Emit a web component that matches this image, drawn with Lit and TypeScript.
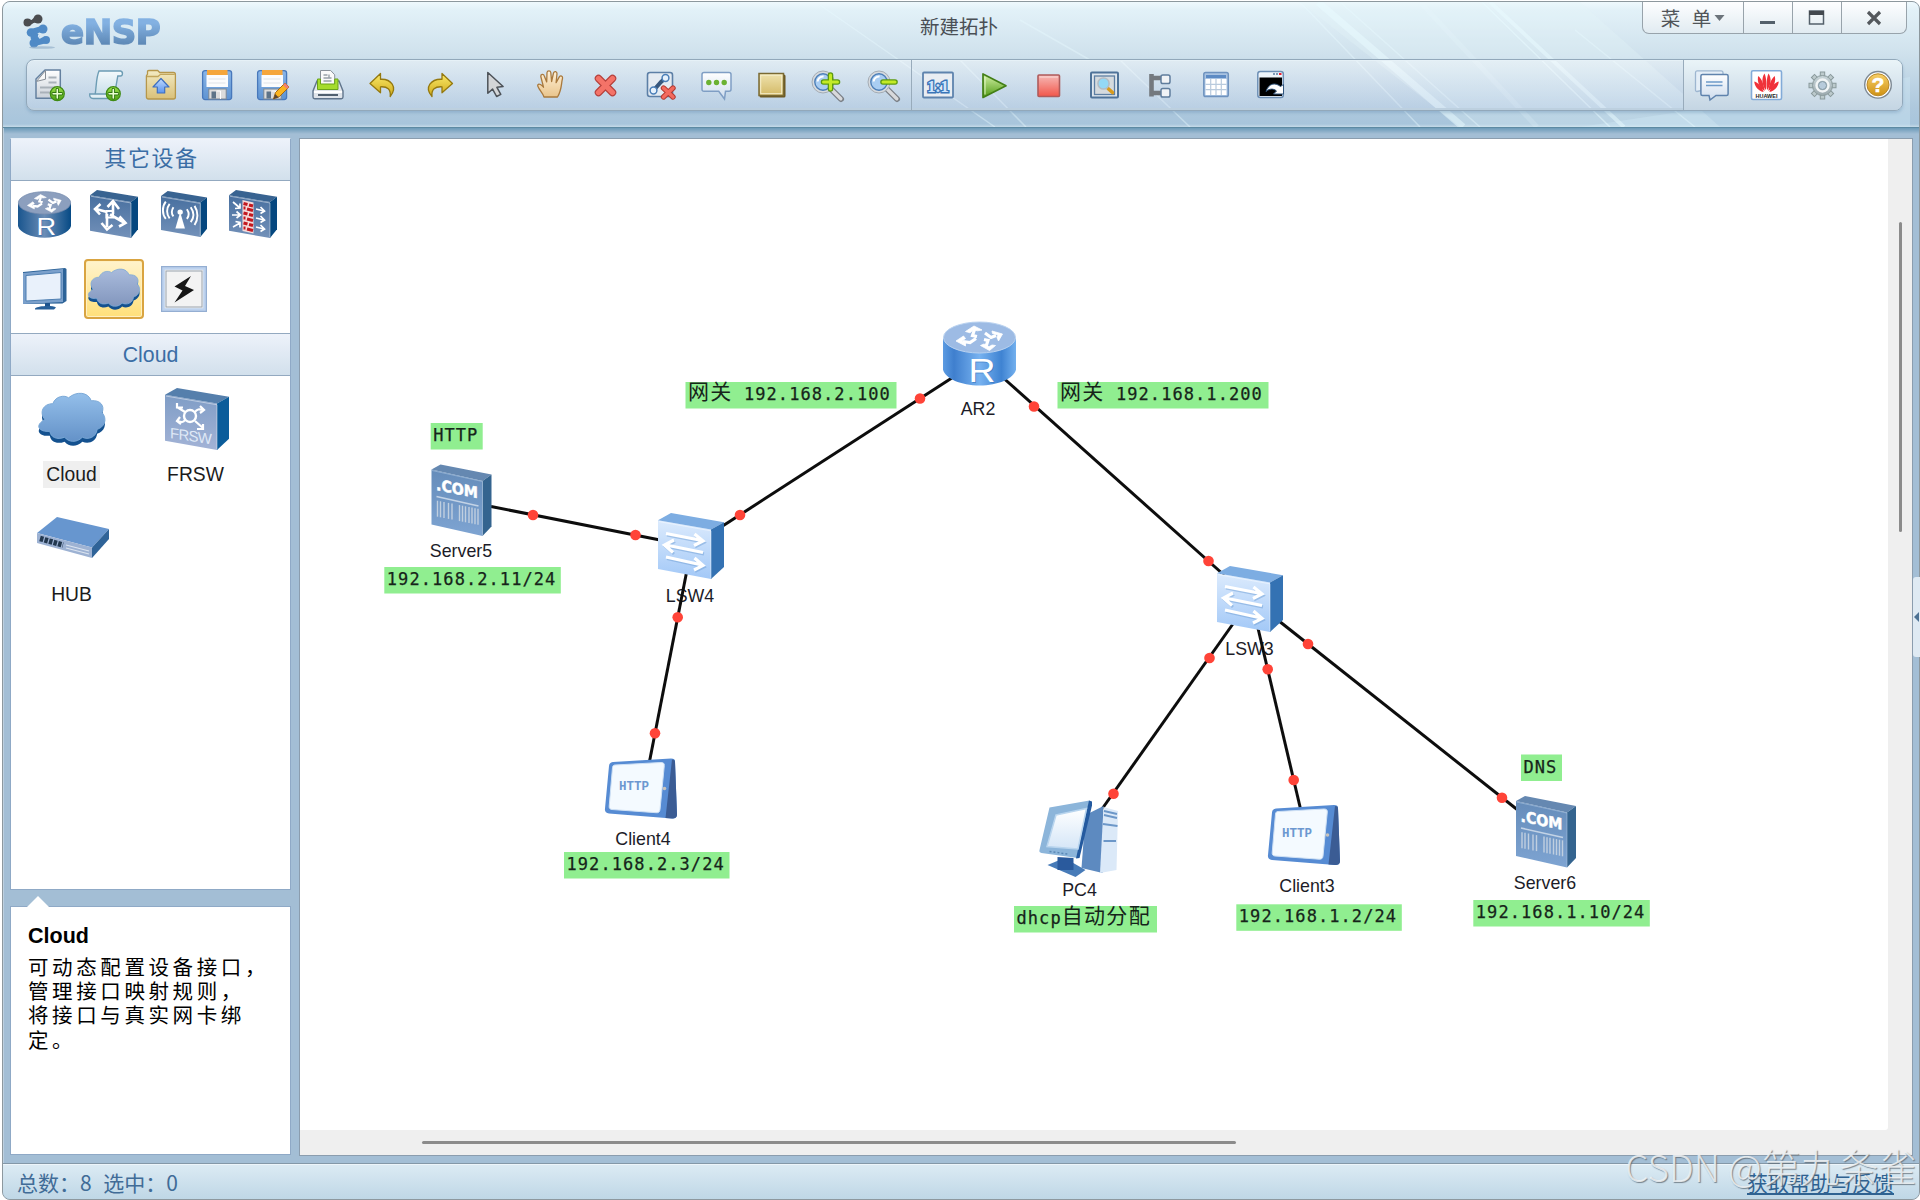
import { LitElement, html, svg, css } from 'lit';
import { customElement, state } from 'lit/decorators.js';
import { classMap } from 'lit/directives/class-map.js';

// ---- Shared gradients (each shadow root needs its own copy) ----

const grad = (id: string, from: string, to: string, horizontal = false) => svg`
  <linearGradient id=${id} x1="0" y1="0" x2=${horizontal ? 1 : 0} y2=${horizontal ? 0 : 1}>
    <stop offset="0" stop-color=${from} /><stop offset="1" stop-color=${to} />
  </linearGradient>`;

const defs = html`
  <svg class="defs" width="0" height="0">
    <defs>
      ${grad('g-paper', '#ffffff', '#c9d0d8')}
      ${grad('g-scroll', '#f4fafc', '#c3dbe8')}
      ${grad('g-plus', '#9be04a', '#4ba012')}
      ${grad('g-folder', '#f3ebc4', '#d9c078')}
      ${grad('g-blue', '#8ab6e8', '#5e93d2')}
      ${grad('g-arrow', '#c3dcff', '#5a94ee')}
      ${grad('g-gold', '#fbea6a', '#cfa91a')}
      ${grad('g-hand', '#fff1d8', '#e9c48b')}
      ${grad('g-pane', '#ffffff', '#cddced')}
      ${grad('g-rect', '#efe3ae', '#d3b966')}
      ${grad('g-play', '#d5f2a8', '#4f9a12')}
      ${grad('g-stop', '#f6b9b6', '#f2564a')}
      ${grad('g-gear', '#c9d6da', '#9caaae')}
      ${grad('g-help', '#f7cf68', '#cf9112')}
      ${grad('g-cloud', '#94bfea', '#6492c8')}
      ${grad('g-cloud-dim', '#a9bbdc', '#8296bd')}
      ${grad('g-dim', '#476f9f', '#7391b9')}
      ${grad('g-frsw', '#7f9dc6', '#a3b3d6')}
      ${grad('g-lsw', '#dcebfd', '#a2c8f7')}
      ${grad('g-server', '#658cba', '#7ea4d2')}
      ${grad('g-screen', '#ffffff', '#d5e6f7')}
      <linearGradient id="g-drum" x1="0" x2="1">
        <stop offset="0" stop-color="#5c9be2" /><stop offset=".15" stop-color="#3f7fce" />
        <stop offset=".5" stop-color="#77b2f0" /><stop offset=".8" stop-color="#3f83d2" />
        <stop offset="1" stop-color="#73b0ee" />
      </linearGradient>
      <linearGradient id="g-drum-dim" x1="0" x2="1">
        <stop offset="0" stop-color="#1a568f" /><stop offset=".5" stop-color="#6b8db6" />
        <stop offset="1" stop-color="#064a85" />
      </linearGradient>
    </defs>
  </svg>`;

// ---- Toolbar icons, 34x34 ----

const plusBadge = svg`
  <circle cx="24.3" cy="25.7" r="7" fill="url(#g-plus)" stroke="#3f8a14" stroke-width="1.2" />
  <path d="M24.3 21.5v8.4M20.1 25.7h8.4" stroke="#2f7410" stroke-width="3.4" stroke-linecap="round" />
  <path d="M24.3 21.5v8.4M20.1 25.7h8.4" stroke="#eaffd0" stroke-width="1.6" stroke-linecap="round" />`;

const floppy = svg`
  <rect x="2.6" y="2.6" width="29" height="29" rx="2.5" fill="url(#g-blue)" stroke="#4878bb" stroke-width="1.3" />
  <rect x="7" y="2" width="20.5" height="5" fill="#f5a63c" />
  <rect x="6.5" y="7" width="21.5" height="12" fill="#fbfcfd" />
  <path d="M8.5 11h17M8.5 15h17" stroke="#dfe3e8" />
  <rect x="8.8" y="21" width="17.4" height="10" fill="#dcdcdc" stroke="#7b8794" />
  <rect x="11.5" y="23.5" width="4.5" height="7" fill="#5d7388" />
  <path d="M16.5 23h4v8" fill="none" stroke="#fff" />`;

const lens = svg`
  <path d="M21 21l10 10" stroke="#7a7f86" stroke-width="6" stroke-linecap="round" />
  <path d="M20.5 20.5l10.3 10.3" stroke="#d8d9db" stroke-width="3.4" stroke-linecap="round" />
  <circle cx="13" cy="14" r="11" fill="#d6dade" stroke="#a4acb4" />
  <circle cx="13" cy="14" r="8.2" fill="#a9cdf2" stroke="#4d7fb8" stroke-width="1.4" />
  <path d="M7.6 13.5a5.5 5.5 0 0 1 6-5" fill="none" stroke="#fff" stroke-width="2" />`;

const icons: Record<string, unknown> = {
  newTopo: svg`
    <path d="M12 2h15.3v28.3H3V11z" fill="url(#g-paper)" stroke="#64809f" stroke-width="1.5" stroke-linejoin="round" />
    <path d="M12.5 2.6v8.6l-9 2.2z" fill="#f7f7f7" stroke="#858c94" />
    <path d="M15.5 9.5h8M15.5 14.5h8M7 19.5h16M7 24.5h10" stroke="#a9b1b9" stroke-width="1.8" />${plusBadge}`,
  newPaper: svg`
    <path d="M10 3h21.5c3 .6 2.2 5 0 5h-2.7l-3.8 21.5H5.5c2.2-8.5 1-18.5 4.5-26.5z" fill="url(#g-scroll)" stroke="#6c9cb4" stroke-width="1.4" />
    <path d="M.7 26h18l1.6 4.5H4C1.5 30.5.4 28.5.7 26z" fill="#e2eff4" stroke="#6c9cb4" stroke-width="1.3" />${plusBadge}`,
  open: svg`
    <path d="M3.5 6V3.7c0-.8.5-1.2 1.2-1.2h9l2 2h13.8c1.4 0 1.9.8 1.9 2V29c0 1.300-.8 2-2 2H4.5C3 31 2.4 30 2.4 29V8z" fill="url(#g-folder)" stroke="#b6974b" stroke-width="1.3" />
    <path d="M3 8.5h11l2.5-2.2h14.3" fill="none" stroke="#c3a75d" stroke-width="1.3" />
    <path d="M17 10.5l8 8.5h-4.3v6h-7.4v-6H9z" fill="url(#g-arrow)" stroke="#3e6fc0" stroke-width="1.2" stroke-linejoin="round" />`,
  save: floppy,
  saveAs: svg`${floppy}
    <path d="M18.5 31l2-6.5L30 15l4 4-9.5 9.5z" fill="#fbb41f" stroke="#a46912" stroke-width="1" />
    <path d="M30 15l4 4-2 2-4-4z" fill="#ef7f76" /><path d="M18.5 31l1.7-5 3.5 3.5z" fill="#5b4632" />`,
  print: svg`
    <path d="M6 13h22l4 10v6c0 1-.6 1.7-1.7 1.7H3.7C2.600 30.7 2 30 2 29v-6z" fill="#dfe4ea" stroke="#60758c" stroke-width="1.4" />
    <path d="M9.5 2.5h10.2l4 4.3V17H9.5z" fill="#fafafa" stroke="#8a929b" />
    <path d="M12.5 7h4M12.5 10h8M12.5 13h8M18 6.5v4" stroke="#98a0a8" stroke-width="1.4" />
    <path d="M6.5 11h3v5h14.2v-5h3.3v10.5H6.5z" fill="#a5dc2d" stroke="#6aa31a" />
    <path d="M3 24h28" stroke="#fff" stroke-width="2" /><path d="M7 27h20" stroke="#51606f" stroke-width="1.8" />`,
  undo: svg`<path d="M4 15.5L14.5 5.5v5.8c10.5-.6 17.5 8 9.7 17.2.8-7-2.7-10.2-9.7-9.7v6z" fill="url(#g-gold)" stroke="#95790f" stroke-width="1.3" stroke-linejoin="round" />`,
  redo: svg`<path d="M30.500 15.5L20 5.5v5.8C9.5 10.7 1.5 19.3 10 28.5c-.8-7 3-10.2 10-9.7v6z" fill="url(#g-gold)" stroke="#95790f" stroke-width="1.3" stroke-linejoin="round" />`,
  pointer: svg`<path d="M10 4.5v20.8l4.8-4.2 4 7.4 4.2-2.2-3.900-7 6.2-.8z" fill="#d3d5d7" stroke="#4d5258" stroke-width="1.5" stroke-linejoin="round" transform="translate(.8 0)" />`,
  hand: svg`<path d="M10 29c-1-4-6.5-8.8-6.3-12 1.3-2 4 0 5.8 2.2L6.8 8.5c-.2-2.5 2.7-2.9 3.5-.6l2.4 6L13 4.5c.3-2.3 3.5-2.3 3.8 0l.8 9 1.900-8.5c.8-2.2 3.6-1.6 3.5.7l-.9 9 3.2-5.800c1.3-1.9 3.8-.8 3.2 1.4C27 16.5 28 21.5 23.5 29z" fill="url(#g-hand)" stroke="#a9793d" stroke-width="1.3" stroke-linejoin="round" transform="translate(1 0)" />`,
  remove: svg`
    <path d="M10.5 10.500l14 14M24.5 10.5l-14 14" stroke="#b5403c" stroke-width="7.5" stroke-linecap="round" />
    <path d="M10.5 10.5l14 14M24.5 10.5l-14 14" stroke="#f47368" stroke-width="5.3" stroke-linecap="round" />`,
  removeLink: svg`
    <rect x="3.5" y="4.5" width="25" height="24" rx="2.5" fill="#e4ebf2" stroke="#5c7fa6" stroke-width="1.6" />
    <path d="M9.5 22.5L17 14l4.5-4" stroke="#37577d" stroke-width="4" fill="none" />
    <circle cx="9.5" cy="22.5" r="3.4" fill="#e6f1fc" stroke="#4b7fb8" stroke-width="1.5" />
    <circle cx="21.5" cy="10" r="3.4" fill="#e6f1fc" stroke="#4b7fb8" stroke-width="1.5" />
    <path d="M19.5 20l9.5 9M29 20l-9.5 9" stroke="#b33a32" stroke-width="5.4" stroke-linecap="round" />
    <path d="M19.5 20l9.5 9M29 20l-9.5 9" stroke="#f36a5e" stroke-width="3.4" stroke-linecap="round" />`,
  comment: svg`
    <path d="M5 4.5h25c1.4 0 2 .7 2 2v14.8c0 1.3-.7 2-2 2h-3.500L25.500 31l-5.800-7.700H5c-1.300 0-2-.7-2-2V6.500c0-1.300.7-2 2-2z" fill="url(#g-pane)" stroke="#7f9ec4" stroke-width="1.5" />
    <circle cx="9.8" cy="14.5" r="2.7" fill="#6cb233" /><circle cx="17.500" cy="14.5" r="2.7" fill="#6cb233" /><circle cx="25.2" cy="14.5" r="2.7" fill="#6cb233" />`,
  rect: svg`
    <rect x="4.500" y="6.500" width="26" height="23" rx="1.5" fill="#6b5720" />
    <rect x="4" y="5.5" width="24.5" height="22" fill="url(#g-rect)" stroke="#7a6a33" stroke-width="1.5" />
    <rect x="5.7" y="7.2" width="21" height="18.5" fill="none" stroke="#f6eecb" />`,
  zoomIn: svg`${lens}
    <path d="M20.5 7v14M13.5 14h14" stroke="#5d9a10" stroke-width="5.6" stroke-linecap="round" />
    <path d="M20.5 7v14M13.5 14h14" stroke="#c3ea26" stroke-width="3" stroke-linecap="round" />`,
  zoomOut: svg`${lens}
    <path d="M17 14h12" stroke="#5d9a10" stroke-width="5.6" stroke-linecap="round" />
    <path d="M17 14h12" stroke="#c3ea26" stroke-width="3" stroke-linecap="round" />`,
  actual: svg`
    <rect x="2" y="4.5" width="30" height="25" rx="1" fill="#e9edf2" stroke="#5e83ad" stroke-width="1.8" />
    <text x="17" y="23.500" font-size="17.5" font-weight="700" font-family="Liberation Serif, serif" text-anchor="middle" fill="#cfe4fb" stroke="#3a75b8" stroke-width="2.8" paint-order="stroke" textLength="22">1:1</text>`,
  play: svg`<path d="M6 6v23.500l23-11.7z" fill="url(#g-play)" stroke="#437f16" stroke-width="1.7" stroke-linejoin="round" /><path d="M8 9v17.5" stroke="#e6f8cc" />`,
  stop: svg`<rect x="6" y="7" width="21.5" height="21.5" rx="1" fill="url(#g-stop)" stroke="#ae5b5b" stroke-width="1.6" /><path d="M7.5 9h18.5" stroke="#fbd9d6" />`,
  inspect: svg`
    <rect x="3" y="4.5" width="27" height="25" rx="1" fill="#dfe7ee" stroke="#4f7399" stroke-width="2" />
    <rect x="6.5" y="8" width="20" height="18.5" fill="#d5dade" stroke="#5e7fa3" stroke-width="1.3" />
    <path d="M20 20.5l4.500 4" stroke="#d99b1c" stroke-width="3.6" stroke-linecap="round" />
    <circle cx="15.5" cy="15.5" r="5.6" fill="#93d8f6" stroke="#b3bcc4" stroke-width="1.5" />`,
  tree: svg`
    <path d="M8.500 6v22.500M8.5 10H18M8.5 25H18" stroke="#74797e" stroke-width="4.6" fill="none" />
    <rect x="18" y="7" width="9" height="8.6" rx="1.8" fill="#f0f3f6" stroke="#5f7d9d" stroke-width="1.5" />
    <rect x="18" y="20.5" width="9" height="8.6" rx="1.8" fill="#f0f3f6" stroke="#5f7d9d" stroke-width="1.5" />`,
  table: svg`
    <rect x="4.8" y="4.5" width="24.5" height="24" rx="1.8" fill="#a9c3e2" stroke="#6f93bf" stroke-width="1.5" />
    <path d="M7 8.5h20" stroke="#5d8bc4" stroke-width="3" />
    <rect x="6.5" y="11" width="21" height="16" fill="#fff" />
    <path d="M11.7 11v16M17 11v16M22.3 11v16M6.5 16.300h21M6.5 21.6h21" stroke="#b8cadd" stroke-width="1.2" />`,
  capture: svg`
    <rect x="3.8" y="3.5" width="25.5" height="26" rx="2.5" fill="#eef4fa" stroke="#6d8fb5" stroke-width="1.5" />
    <path d="M19 6h2M22 6h2" stroke="#5b7da3" stroke-width="1.6" /><path d="M25 6h2.500" stroke="#e23" stroke-width="2" />
    <rect x="5.5" y="9.500" width="22.5" height="18.5" fill="#000" />
    <path d="M12 23.500c2.500-8 9-9.500 14.500-5l3-2v9.500h-10l3-3c-3-2.700-7-2.500-10.500.5z" fill="#fff" stroke="#31557d" stroke-width="1" />`,
  forum: svg`
    <path d="M3 2.800h24a2 2 0 0 1 2 2V21c0 1-.6 1.500-1.500 1.500H7.500L3 23.500c-1 0-1.500-.6-1.500-1.500V4.800c0-1.200.6-2 1.500-2z" fill="#e4eef7" stroke="#9db6d0" stroke-width="1.3" />
    <path d="M8.500 6.500h24c1 0 1.6.6 1.6 1.6v17.8c0 1-.6 1.500-1.600 1.500H22l-6 4.600-1-4.600H8.500c-1 0-1.600-.5-1.600-1.500V8.100c0-1 .6-1.600 1.600-1.600z" fill="url(#g-pane)" stroke="#5f83ad" stroke-width="1.5" />
    <path d="M12 14h16.500M12 17.500h16.500" stroke="#6e9ac9" stroke-width="1.4" />`,
  vendor: svg`
    <rect x="1.500" y="2.7" width="30" height="28.8" rx="1.5" fill="#fff" stroke="#82abd8" stroke-width="1.6" />
    <g fill="#f0323a" transform="translate(-.7 .5)">
      <path d="M16.600 21.500C12.500 17 12 9 15.200 5c2 4 2.200 12 1.400 16.500z" /><path d="M17.800 21.500c4.100-4.500 4.600-12.500 1.400-16.500-2 4-2.200 12-1.400 16.500z" />
      <path d="M15.300 22.500C9.500 19 7.500 12 9 7.500c3.500 2.500 6 10 6.300 15z" /><path d="M19.100 22.500c5.800-3.500 7.800-10.500 6.300-15-3.500 2.500-6 10-6.300 15z" />
      <path d="M14.300 23.500C8.500 22.500 5 17 5 13c4 1 8 6 9.300 10.500z" /><path d="M20.100 23.500c5.800-1 9.300-6.500 9.300-10.500-4 1-8 6-9.300 10.500z" />
    </g>
    <text x="16.500" y="29.600" font-size="5.500" font-weight="700" font-family="Liberation Sans, sans-serif" text-anchor="middle" fill="#222" textLength="22">HUAWEI</text>`,
  settings: svg`
    <g stroke="#8a9a9c" stroke-width="5.400">
      <path d="M17.500 3.500v28M3.500 17.500h28M7.600 7.600l19.800 19.800M27.400 7.600L7.600 27.400" />
    </g>
    <g stroke="#bccacc" stroke-width="3.400">
      <path d="M17.500 4.500v26M4.500 17.500h26M8.300 8.300l18.400 18.400M26.700 8.300L8.300 26.700" />
    </g>
    <circle cx="17.500" cy="17.500" r="10" fill="url(#g-gear)" stroke="#8a9a9c" />
    <circle cx="17.500" cy="17.500" r="6" fill="none" stroke="#f1f5f6" stroke-width="2.400" />
    <circle cx="17.500" cy="17.500" r="4" fill="#b7cbdb" stroke="#879ba6" />`,
  help: svg`
    <circle cx="17" cy="16.800" r="13.300" fill="#fdfdfc" stroke="#7e8a94" stroke-width="1.400" />
    <circle cx="17" cy="16.800" r="11" fill="url(#g-help)" stroke="#b98a2c" />
    <text x="17" y="24.300" font-size="21" font-weight="700" font-family="Liberation Sans, sans-serif" text-anchor="middle" fill="#fff" stroke="#fff" stroke-width=".6">?</text>`,
};

const icon = (name: string) => html`<svg class="icon" viewBox="0 0 34 34" fill="none">${icons[name]}</svg>`;

// ---- Device drawings, origin at the top left of each ----

const crossArrows = svg`
  <path d="M34 15l-4.500-1 2-6M42 11.500l6 4.500 5-2M33 17l-6 4-7-1M41 18l4 1-2 6" fill="none" stroke="#fff" stroke-width="3.200" />
  <path d="M22.500 10L31 4.500l8 4-4.500.8-4-1-3.500 3z M49 9.500l10.500 3-4 7-1.500-3.500 1-2.500-5.500-1.500z M20.500 14.500L13 19.500l9.500 5 0-3-3.500-2 3.500-2.500z M37.500 24l9 5 6-5-3.500-.5-3 1.700-5-2.700z"
    fill="#fff" stroke="#fff" stroke-width=".8" stroke-linejoin="round" />`;

const drum = (dim: boolean) => svg`
  <path d="M0 17v31c2 9 18 16 36.500 16S71 57 73 48V17z" fill=${dim ? 'url(#g-drum-dim)' : 'url(#g-drum)'} />
  <ellipse cx="36.500" cy="16" rx="36" ry="15.500" fill=${dim ? '#8c9fbe' : '#9dbbe4'} stroke=${dim ? '#6f87ab' : '#b9d2f0'} />
  ${crossArrows}
  <text x="39" y="60" text-anchor="middle" font-size="33" textLength="27" lengthAdjust="spacingAndGlyphs" font-family="Liberation Sans, sans-serif" fill="#2e6cb4" opacity=".5" transform="translate(1 1)">R</text>
  <text x="39" y="60" text-anchor="middle" font-size="33" textLength="27" lengthAdjust="spacingAndGlyphs" font-family="Liberation Sans, sans-serif" fill="#fff">R</text>`;

const box = (w: number, h: number, dx: number, front: string, top: string, side: string) => svg`
  <path d="M0 ${h * 0.11}L${w - dx} ${h * 0.25}V${h}L0 ${h * 0.85}z" fill=${front} />
  <path d="M0 ${h * 0.11}L${dx} 0L${w} ${h * 0.14}L${w - dx} ${h * 0.25}z" fill=${top} />
  <path d="M${w - dx} ${h * 0.25}L${w} ${h * 0.14}V${h * 0.82}L${w - dx} ${h}z" fill=${side} />
  <path d="M1 ${h * 0.13}L${w - dx} ${h * 0.27}V${h - 1}" fill="none" stroke="#fff" stroke-opacity=".45" />`;

const lswArrows = 'M8 20.500l36 7M36.500 21l8.500 7-9 4.500M45 39.500L8 32M16 27l-9.500 5 8.500 7.500M8 44l36 8M36.500 45l8.500 7.500-9 4.500';
const lsw = svg`
  ${box(66, 66, 13, 'url(#g-lsw)', '#7dade2', '#3472b3')}
  <path d=${lswArrows} fill="none" stroke="#6f9fd6" stroke-width="3" transform="translate(1 1.500)" opacity=".5" />
  <path d=${lswArrows} fill="none" stroke="#fff" stroke-width="3.200" />`;

const bars = [6, 9, 12.5, 17, 20.5, 28, 31, 34, 37.5, 40.5, 43.5, 46.5];

const server = svg`
  <path d="M0 5l51 11.500V71.500L0 60z" fill="url(#g-server)" />
  <path d="M0 5L9 0l51 10-9 6.500z" fill="#6588b1" />
  <path d="M51 16.500L60 10v52l-9 9.500z" fill="#34648f" />
  <path d="M.5 6l50.500 11v54" fill="none" stroke="#a9c3e0" stroke-opacity=".6" />
  <text transform="matrix(1 .2 0 1 4.500 25.500)" font-size="15.500" font-weight="700" font-family="DejaVu Sans, sans-serif" fill="#fff" stroke="#fff" stroke-width=".5" textLength="42" lengthAdjust="spacingAndGlyphs">.COM</text>
  <path d="M5 32l42 9.500" stroke="#c3d3e6" stroke-width="1.500" />
  ${bars.map(x => svg`<path d="M${x} ${35 + x * 0.2}v16" stroke="#c0cfe0" stroke-width="1.400" />`)}`;

const client = svg`
  <path d="M8 3.500L66 0c3 0 4 1 4 3l2 53c0 3-2 4.500-5 4L4 55c-3-.5-4.500-2-4-5L4 7.500C4.300 5 5.500 3.800 8 3.500z" fill="#568bd3" />
  <path d="M67 1c2 0 3 .8 3 2.500L72 56c0 3-2 4-5 4l-6.500-.5z" fill="#3b5c94" />
  <path d="M10 6.500L56 4c2.500 0 3.500 1 3.300 3L55 51c-.3 2.500-1.500 3.500-4 3.200L7 51c-2-.2-3-1.200-2.800-3.300L7.500 9c.2-1.700 1-2.400 2.500-2.500z" fill="#f4faff" stroke="#cfe1f5" />
  <circle cx="59.500" cy="30" r="1.800" fill="#c9c3bb" />
  <text x="29" y="31.500" text-anchor="middle" font-size="12" font-weight="700" font-family="Liberation Mono, monospace" fill="#6c98d0" textLength="30" lengthAdjust="spacingAndGlyphs">HTTP</text>`;

const pc = svg`
  <path d="M46 15l18-9-1 67-21-5z" fill="#5d8ac0" />
  <path d="M64 7l14.500 4-1.500 59-16.500 3z" fill="#dbe9f8" />
  <path d="M64.500 11l13 3M64.500 15l13 3M63.500 24l14.500 2M64 41h12.500" stroke="#6c97c8" stroke-width="1.900" />
  <path d="M8 65l17-7 21 12-10 7z" fill="#477bb8" />
  <path d="M18 57l16 1v12H18z" fill="#2a5a9d" />
  <path d="M10 7.500L50 0.500 38 58 2 53c-1.800-.4-2.500-1.400-2-3z" fill="#8cb5da" />
  <path d="M49.500 .500l3 1v4L40 58l-3.500.5z" fill="#245a9f" />
  <path d="M16.500 15L47 8.500 38.500 49 7.500 46.500z" fill="url(#g-screen)" stroke="#b9d5ee" stroke-width="1.500" />
  <path d="M10 51.500l18 2.500" stroke="#5a88b5" stroke-width="1.500" stroke-dasharray="2 2" />`;

const cloudPath = 'M8 27C2 20 6 11 16 11 19 3 28 2 32 5 40-2 52-1 55 8c9-1 14 5 11 12 6 7 2 15-5 17-1 8-9 11-15 8-6 6-14 5-18 0-8 3-14 0-15-6C2 40-3 33 8 27z';
const cloud = (fill: string) => svg`
  <path d=${cloudPath} transform="translate(0 6)" fill="#14518f" />
  <path d=${cloudPath} transform="translate(0 1.500)" fill=${fill} stroke="#7ba9d6" />`;

const sideBox = box(48, 48, 7, 'url(#g-dim)', '#386391', '#05477f');

// kinds shown in the sidebar grid: drawing + its viewBox
const kinds = [
  { id: 'router', w: 53, h: 47, box: '0 0 73 64', art: drum(true) },
  { id: 'switch', w: 48, h: 48, box: '0 0 48 48', art: svg`${sideBox}
      <path d="M17 37V24M11.500 33l5.500 6.500 5.500-4.500M20 24.500l14 8M29.500 26.500l6 6.500-6.500 3.500M17 22L6 19M10.500 14L5 19l5 5.500M23 24V13M17.500 17l5.500-6 6 8" fill="none" stroke="#fff" stroke-width="2.600" />
      <rect x="16.500" y="21" width="6.500" height="6.500" fill="none" stroke="#fff" stroke-width="2" />` },
  { id: 'wlan', w: 46, h: 46, box: '0 0 48 48', art: svg`${sideBox}
      <path d="M20 22l5 17H15z" fill="#fff" /><circle cx="20" cy="22" r="2.800" fill="#fff" />
      <path d="M13 17c-2 3-2 7 0 9.500M9 13.500c-3.500 4.500-3.500 11 0 15M5 11c-4 5-4 13 0 18M27 19c2.500 3.500 2.500 7 0 10M31 17c3.500 5 3.500 11 0 15.500M35 15.500c4 6 4 14 0 20" fill="none" stroke="#fff" stroke-width="2" />` },
  { id: 'firewall', w: 48, h: 48, box: '0 0 48 48', art: svg`${sideBox}
      <path d="M13.500 10l11 2.500v31l-11-2.500z" fill="#f5dada" />
      <path d="M14.500 13.500l4 1M20 15l4 1M14.500 18h2M18 19l6 1.500M14.500 23l4 1M20 24.500l4 1M14.500 28h2M18 29l6 1.500M14.500 33l4 1M20 34.500l4 1M14.500 38h2M18 39l6 1.500" stroke="#c3181f" stroke-width="3.200" />
      <path d="M4 12l7 6M11 13.500V18l-5 .5M3 25h8M7.500 21.500l4 3.500-4 3M4 37l7-4M6.500 31.500l4.500 1v5M27 19l8 2M31.500 17l4 4-4 2.500M27 28l8 2M31.500 26l4 4-4 2.500M27 37l8 2M31.500 35l4 4-4 2.500" fill="none" stroke="#fff" stroke-width="1.700" />` },
  { id: 'pc', w: 44, h: 42, box: '0 0 44 42', art: svg`
      <path d="M0 4L42 0l1.500 1v32l-4 2.500L0 36z" fill="#2d6398" /><path d="M0 5l40-4v33L0 36z" fill="#7ba0cb" />
      <path d="M3 7.500l35-3V31L3 33z" fill="#e9f1fb" stroke="#4e7fb2" />
      <path d="M22 35h5v4h-5z" fill="#1e548e" /><path d="M12 40.500c4-3 18-3 21-1l-2 2H12z" fill="#275f99" />` },
  { id: 'cloud', w: 55, h: 46, box: '0 0 72 56', art: cloud('url(#g-cloud-dim)') },
  { id: 'link', w: 46, h: 46, box: '0 0 46 46', art: svg`
      <rect x="1" y="1" width="44" height="44" fill="#f2f2f2" stroke="#94aed2" stroke-width="2" />
      <rect x="2.500" y="2.500" width="41" height="41" fill="none" stroke="#bdd2ee" stroke-width="2.500" />
      <rect x="5" y="5" width="36" height="36" fill="#f3f3f3" stroke="#9aa3ad" />
      <path d="M30 10L13.500 20.500l8 4-8 12L33 24l-9-4z" fill="#161616" />` },
];

const models = [
  { name: 'Cloud', w: 71, h: 58, box: '0 0 72 56', art: cloud('url(#g-cloud)') },
  { name: 'FRSW', w: 64, h: 62, box: '0 0 64 62', art: svg`
      ${box(64, 62, 12, 'url(#g-frsw)', '#557fac', '#0b5c9a')}
      <circle cx="25" cy="28" r="6" fill="none" stroke="#fff" stroke-width="2.400" />
      <path d="M20 24l-8-5M12 15v4.500h6M30 24c2-3 4-3 8-2M35 18l4 4-4 3M20 32c-2 3-4 2-8 1M15 29l-3 4 4 3M30 33l8 7M38 36v5h-6" fill="none" stroke="#fff" stroke-width="2.200" />
      <text transform="matrix(1 .15 0 1 5 50)" font-size="15" font-family="Liberation Sans, sans-serif" fill="#dfe8f6" textLength="42">FRSW</text>` },
  { name: 'HUB', w: 72, h: 42, box: '0 0 72 42', art: svg`
      <path d="M0 16L20 0l52 12-17 18.500z" fill="#6796cf" />
      <path d="M0 16l55 14.500V41L0 26z" fill="#9db2d3" />
      <path d="M55 30.500L72 12v10L55 41z" fill="#2f6398" />
      <path d="M3 21.500l23 6.500" stroke="#23384f" stroke-width="5.500" stroke-dasharray="3.500 1.200" />
      <path d="M29 28l23 6M29 31l23 6" stroke="#dbe4f0" stroke-width="1.200" />` },
];

// ---- Topology data (page coordinates) ----

const devices = [
  { name: 'AR2', x: 943, y: 321.5, lx: 978, ly: 415, art: drum(false) },
  { name: 'LSW4', x: 658, y: 513, lx: 690, ly: 602, art: lsw },
  { name: 'LSW3', x: 1217, y: 566, lx: 1249.5, ly: 654.5, art: lsw },
  { name: 'Server5', x: 431.5, y: 464.5, lx: 461, ly: 557, art: server },
  { name: 'Server6', x: 1516, y: 796, lx: 1545, ly: 888.5, art: server },
  { name: 'Client4', x: 605, y: 758.5, lx: 643, ly: 845, art: client },
  { name: 'Client3', x: 1268, y: 805, lx: 1307, ly: 891.5, art: client },
  { name: 'PC4', x: 1039.5, y: 800, lx: 1079.5, ly: 896, art: pc },
];

// [x1, y1, x2, y2] of the line, then both port dots
const links = [
  [491, 506.5, 660, 540, 533, 515, 635.5, 535],
  [718, 529, 958, 374, 740, 515, 920, 398.5],
  [1000, 375, 1224, 575, 1034, 406.5, 1208.5, 561],
  [687, 570, 649, 764, 677.7, 617.3, 655, 733.3],
  [1235, 621, 1102, 809, 1209.5, 658, 1113.5, 793.7],
  [1257, 624, 1301, 811, 1267.7, 669.3, 1293.7, 780],
  [1279, 621, 1519, 811, 1308, 644, 1502, 797.7],
];

const notes = [
  { x: 430.7, y: 423, w: 52, text: 'HTTP' },
  { x: 384.3, y: 567, w: 176.5, text: '192.168.2.11/24' },
  { x: 685.5, y: 382, w: 211, text: '网关 192.168.2.100' },
  { x: 1057.5, y: 382, w: 211, text: '网关 192.168.1.200' },
  { x: 564, y: 852, w: 165.5, text: '192.168.2.3/24' },
  { x: 1014, y: 906, w: 143, text: 'dhcp自动分配' },
  { x: 1236.3, y: 904.3, w: 165.5, text: '192.168.1.2/24' },
  { x: 1521, y: 754.5, w: 41, text: 'DNS' },
  { x: 1473.3, y: 900, w: 176.5, text: '192.168.1.10/24' },
];

// ==============================
// <ensp-header>
// ==============================

@customElement('ensp-header')
export class EnspHeader extends LitElement {
  static styles = css`
    :host {
      display: block;
      position: relative;
      height: 125px;
      background: linear-gradient(#eff9fd 0, #e2f1f8 8px, #d0e2ed 50px, #aec8dd 105px, #a8c5dc 122px, #c5dae8 125px);
      font-family: "Noto Sans CJK SC", sans-serif;
    }
    .defs, .streaks { position: absolute; left: 0; top: 0; }
    .top {
      position: relative;
      display: grid;
      grid-template-columns: 1fr auto 1fr;
      height: 57px;
    }
    .logo { display: flex; gap: 4px; padding: 12px 0 0 20px; }
    .brand {
      font: 700 34px/28px "DejaVu Sans", sans-serif;
      letter-spacing: -0.4px;
      height: 34px;
      margin-top: 4px;
      background: linear-gradient(#83b1e2 15%, #5c87b4 80%);
      -webkit-background-clip: text;
      -webkit-text-stroke: 1.6px transparent;
      color: transparent;
    }
    .title { font-size: 19.5px; line-height: 28px; padding-top: 10px; margin-right: 4px; color: #4a4f55; }
    .buttons {
      display: flex;
      justify-self: end;
      height: 32px;
      margin-right: 12px;
      box-sizing: border-box;
      border: 1px solid #98a3ab;
      border-top: 0;
      border-radius: 0 0 7px 7px;
      background: linear-gradient(#fdfeff, #e1ebf1);
    }
    .buttons > span { width: 48px; border-left: 1px solid #98a3ab; display: flex; align-items: center; justify-content: center; }
    .buttons > .menu { width: 100px; border: 0; font-size: 19.5px; word-spacing: 7px; color: #505458; gap: 3px; }
    .buttons > .close { width: 64px; }
    .bar {
      position: relative;
      display: flex;
      height: 52px;
      box-sizing: border-box;
      margin: 0 16px 0 23px;
      border: 1px solid #92a8ba;
      border-radius: 8px;
      background: linear-gradient(rgba(255, 255, 255, 0.4), rgba(206, 219, 240, 0.35));
      box-shadow: inset 0 1px 0 #e6f1f7, inset 0 -2px 0 #bdd0df, 0 2px 3px rgba(110, 150, 185, 0.4);
    }
    .group { display: flex; align-items: center; gap: 21.5px; box-sizing: border-box; padding: 0 0 1px 6px; }
    .main { width: 884px; }
    .view { flex: 1; border-left: 1px solid #98abbb; padding-left: 9px; }
    .right {
      width: 219px;
      border-left: 1px solid #98abbb;
      border-radius: 0 7px 7px 0;
      padding-left: 10px;
      background: linear-gradient(#eaf4f8, #c4d5e3);
    }
    .icon { width: 34px; height: 34px; overflow: visible; flex: none; }
  `;

  render() {
    return html`
      ${defs}
      <svg class="streaks" width="1916" height="125" viewBox="3 2 1916 125" fill="none" stroke="#e9fbff">
        <path d="M1300 2h280l140 125h-260z" fill="#e6f5fa" fill-opacity=".3" stroke="none" />
        <path d="M1580 127l330-50v50z" fill="#cfe9f5" fill-opacity=".4" stroke="none" />
        <path d="M1318 2l145 125" stroke-width="7" stroke-opacity=".5" />
        <path d="M1300 2l120 125M1340 2l140 125" stroke-width="1.500" stroke-opacity=".4" />
        <path d="M1490 2l134 125" stroke-width="4" stroke-opacity=".5" />
        <path d="M1482 2l128 125" stroke-width="1.500" stroke-opacity=".5" />
        <path d="M1420 2l117 125" stroke-width="5" stroke-opacity=".2" />
        <path d="M1575 30l120 97M1120 60l70 67M820 5l175 122M960 60l66 67M1020 20l70 40" stroke-width="1.500" stroke-opacity=".4" />
      </svg>
      <div class="top">
        <div class="logo">
          <svg width="34" height="36" viewBox="0 0 34 36">
            <g fill="#4b4d50"><circle cx="4.500" cy="8.500" r="4" /><circle cx="15" cy="5" r="4.500" /><path d="M3.500 5.500l5 .5 5-4.500 4 6-7 1.500-4.500 3z" /></g>
            <g fill="#4f8ac6"><circle cx="8" cy="18.500" r="4.300" /><circle cx="20" cy="15" r="4.500" /><circle cx="12" cy="23" r="4.500" /><circle cx="23" cy="26" r="4" /><circle cx="11" cy="29" r="4.500" /><path d="M8 15l12-3.500v6L12 20zM10 27l12-4.500v7L12 32z" /></g>
            <path d="M17 20.500c-2 1-2 2.500.5 3.500" stroke="#d4e6f6" stroke-width="1.500" fill="none" />
            <ellipse cx="19" cy="33.500" rx="13" ry="1.300" fill="#8aa8c4" opacity=".6" />
          </svg>
          <span class="brand">eNSP</span>
        </div>
        <div class="title">新建拓扑</div>
        <div class="buttons">
          <span class="menu">菜 单<svg width="11" height="8" viewBox="0 0 11 8"><path d="M.500 1h10L5.500 7z" fill="#6c747b" /></svg></span>
          <span><svg width="16" height="16"><path d="M0 12.500h15" stroke="#54606b" stroke-width="3" /></svg></span>
          <span><svg width="18" height="16"><path d="M1.500 1v13h14V1z" fill="none" stroke="#54606b" stroke-width="1.500" /><path d="M1 3h15" stroke="#43494f" stroke-width="4" /></svg></span>
          <span class="close"><svg width="16" height="16"><path d="M2 2l12 12M14 2L2 14" stroke="#54585d" stroke-width="3.200" /></svg></span>
        </div>
      </div>
      <div class="bar">
        <div class="group main">
          ${['newTopo', 'newPaper', 'open', 'save', 'saveAs', 'print', 'undo', 'redo', 'pointer', 'hand', 'remove', 'removeLink', 'comment', 'rect', 'zoomIn', 'zoomOut'].map(icon)}
        </div>
        <div class="group view">
          ${['actual', 'play', 'stop', 'inspect', 'tree', 'table', 'capture'].map(icon)}
        </div>
        <div class="group right">
          ${['forum', 'vendor', 'settings', 'help'].map(icon)}
        </div>
      </div>
    `;
  }
}

// ==============================
// <ensp-sidebar>
// ==============================

@customElement('ensp-sidebar')
export class EnspSidebar extends LitElement {
  static styles = css`
    :host {
      display: flex;
      flex-direction: column;
      gap: 16px;
      width: 281px;
      padding-bottom: 1px;
      box-sizing: border-box;
      font-family: "Liberation Sans", "Noto Sans CJK SC", sans-serif;
    }
    .defs { position: absolute; }
    .panel { flex: 1; display: flex; flex-direction: column; background: #fff; border: 1px solid #8fa9c6; border-top-color: #e7eff7; }
    .head {
      height: 41px;
      line-height: 42px;
      text-align: center;
      font-size: 21.3px;
      color: #3b6ea5;
      background: linear-gradient(#edf2fa, #d2e0ec);
      border-bottom: 1px solid #93a9c0;
    }
    .head.cjk { letter-spacing: 1.6px; font-size: 22px; line-height: 40px; padding-left: 2px; }
    .kinds { display: grid; grid-template-columns: repeat(4, 69.5px); grid-auto-rows: 60px; row-gap: 15px; height: 149px; padding-top: 3px; margin-left: -1px; justify-items: center; }
    .kind { width: 60px; height: 60px; box-sizing: border-box; display: flex; align-items: center; justify-content: center; border: 2px solid transparent; border-radius: 4px; }
    .kind.on { border-color: #d9a441; background: linear-gradient(#fff3cc, #ffe07a); box-shadow: inset 0 0 0 1px #fff0c0; }
    .head.sub { border-top: 1px solid #93a9c0; }
    .models { display: grid; grid-template-columns: 124px 124px; grid-auto-rows: 119.5px; margin-left: -0.5px; }
    .model { display: flex; flex-direction: column; align-items: center; }
    .art { display: flex; align-items: center; height: 85px; }
    .name { font-size: 19.3px; line-height: 27px; padding: 0 3px; margin-left: -2px; color: #1b1b1b; }
    .name.on { background: #efefef; }
    svg { overflow: visible; }
    .info { position: relative; height: 249px; box-sizing: border-box; border: 1px solid #8fa9c6; background: #fff; padding: 17px 18px; color: #000; }
    .info::before { content: ""; position: absolute; left: 16px; top: -11px; border: 11px solid transparent; border-top: 0; border-bottom-color: #fff; }
    .info h3 { margin: 0 0 5px -1px; font-size: 21.5px; line-height: 25px; }
    .info p { margin: 0 0 0 -1px; font: 20.5px/24.2px "Noto Sans CJK SC", sans-serif; letter-spacing: 3.6px; white-space: nowrap; }
  `;

  @state() private kind = 'cloud';
  @state() private model = 'Cloud';

  render() {
    return html`
      ${defs}
      <div class="panel">
        <div class="head cjk">其它设备</div>
        <div class="kinds">
          ${kinds.map(k => html`
            <div class=${classMap({ kind: true, on: k.id === this.kind })} @click=${() => { this.kind = k.id; }}>
              <svg width=${k.w} height=${k.h} viewBox=${k.box}>${k.art}</svg>
            </div>`)}
        </div>
        <div class="head sub">Cloud</div>
        <div class="models">
          ${models.map(m => html`
            <div class="model" @click=${() => { this.model = m.name; }}>
              <div class="art"><svg width=${m.w} height=${m.h} viewBox=${m.box}>${m.art}</svg></div>
              <span class=${classMap({ name: true, on: m.name === this.model })}>${m.name}</span>
            </div>`)}
        </div>
      </div>
      <div class="info">
        <h3>Cloud</h3>
        <p>可动态配置设备接口，<br />管理接口映射规则，<br />将接口与真实网卡绑<br />定。</p>
      </div>
    `;
  }
}

// ==============================
// <ensp-topology>
// ==============================

@customElement('ensp-topology')
export class EnspTopology extends LitElement {
  static styles = css`
    :host {
      display: grid;
      grid-template-columns: 1fr 23px;
      grid-template-rows: 1fr 24px;
      flex: 1;
      border: 1px solid #8b9dae;
      background: #efefef;
    }
    .defs { position: absolute; }
    .stage { display: block; width: 1588px; height: 991px; background: #fff; border-radius: 0 0 3px 0; }
    .vbar { display: flex; justify-content: center; padding-top: 83px; }
    .vbar i { width: 3px; height: 310px; background: #8b8b8b; border-radius: 2px; }
    .hbar { display: flex; align-items: center; padding: 0 0 2px 122px; }
    .hbar i { width: 814px; height: 3px; background: #8b8b8b; border-radius: 2px; }
    .name { font: 17.8px "Liberation Sans", sans-serif; text-anchor: middle; fill: #1c1c28; }
    .note rect { fill: #90ee90; }
    .note text { font: 17px "DejaVu Sans Mono", monospace; letter-spacing: 1.07px; white-space: pre; fill: #16241a; stroke: #16241a; stroke-width: 0.25px; }
    .note .cjk { font: 21px "Noto Sans CJK SC", sans-serif; letter-spacing: 1.3px; stroke: none; }
    .wire { stroke: #0d0d0d; stroke-width: 3; }
    .port { fill: #ff4438; }
  `;

  private note(n: { x: number; y: number; w: number; text: string }) {
    const parts = n.text.split(/([\u4e00-\u9fff]+)/).filter(Boolean);
    const isCjk = (s?: string) => !!s && /[\u4e00-\u9fff]/.test(s);
    // the CJK run sits slightly above the latin baseline
    return svg`
      <g class="note">
        <rect x=${n.x} y=${n.y} width=${n.w} height="26.500" />
        <text x=${n.x + 2.5} y=${n.y + 18}>${parts.map((p, i) => isCjk(p)
          ? svg`<tspan class="cjk" dy="-1.500">${p}</tspan>`
          : svg`<tspan dy=${isCjk(parts[i - 1]) ? 1.5 : 0}>${p}</tspan>`)}</text>
      </g>`;
  }

  render() {
    return html`
      ${defs}
      <svg class="stage" viewBox="300 139 1588 991">
        ${devices.map(d => svg`<text class="name" x=${d.lx} y=${d.ly}>${d.name}</text>`)}
        ${links.map(l => svg`<line class="wire" x1=${l[0]} y1=${l[1]} x2=${l[2]} y2=${l[3]} />`)}
        ${devices.map(d => svg`<g transform="translate(${d.x} ${d.y})">${d.art}</g>`)}
        ${links.map(l => svg`
          <circle class="port" cx=${l[4]} cy=${l[5]} r="5.300" />
          <circle class="port" cx=${l[6]} cy=${l[7]} r="5.300" />`)}
        ${notes.map(n => this.note(n))}
      </svg>
      <div class="vbar"><i></i></div>
      <div class="hbar"><i></i></div>
    `;
  }
}

// ==============================
// <app-root>
// ==============================

@customElement('app-root')
export class AppRoot extends LitElement {
  static styles = css`
    :host {
      display: block;
      position: relative;
      width: 1920px;
      height: 1200px;
      box-sizing: border-box;
      padding: 1px 0 0 2px;
      background: #fff;
      overflow: hidden;
    }
    .window {
      display: flex;
      flex-direction: column;
      height: 1199px;
      box-sizing: border-box;
      border: 1px solid #8d989e;
      border-radius: 8px;
      overflow: hidden;
      background: #a3bed5;
    }
    .body {
      flex: 1;
      display: flex;
      gap: 8px;
      padding: 10px 6px 7px 7px;
      border-top: 1px solid #5d8aa3;
      background: linear-gradient(#6c9ab8, #a3bed5 6px);
      box-shadow: inset 1px 0 0 #bdd0e0;
    }
    .status {
      display: flex;
      justify-content: space-between;
      height: 35px;
      border-top: 1px solid #8498a8;
      box-shadow: inset 0 1px 0 #edf5fa;
      background: linear-gradient(#dcebf4, #bfd7e6);
      padding: 0 25px 0 14px;
      font: 21px/36px "Noto Sans CJK SC", sans-serif;
      word-spacing: 7px;
      color: #416c97;
    }
    .status a { color: #2f6291; text-decoration: underline; }
    .handle {
      position: absolute;
      right: 0;
      top: 577px;
      width: 7px;
      height: 80px;
      background: #dfeaf3;
      border-radius: 3px 0 0 3px;
      display: flex;
      align-items: center;
    }
    .watermark {
      position: absolute;
      right: 3px;
      top: 1138px;
      font: 37px/54px "Noto Sans CJK SC", sans-serif;
      font-weight: 300;
      color: rgba(240, 243, 245, 0.85);
      text-shadow: 1px 1px 1px rgba(90, 100, 110, 0.75);
      white-space: nowrap;
    }
    .watermark span { font-size: 38.8px; }
  `;

  render() {
    return html`
      <div class="window">
        <ensp-header></ensp-header>
        <div class="body">
          <ensp-sidebar></ensp-sidebar>
          <ensp-topology></ensp-topology>
        </div>
        <div class="status">
          <span>总数：8 选中：0</span>
          <a>获取帮助与反馈</a>
        </div>
      </div>
      <div class="handle"><svg width="6" height="10" viewBox="0 0 6 10"><path d="M6 0v10L1 5z" fill="#4c7193" /></svg></div>
      <div class="watermark">CSDN @<span>第九条雀</span></div>
    `;
  }
}
